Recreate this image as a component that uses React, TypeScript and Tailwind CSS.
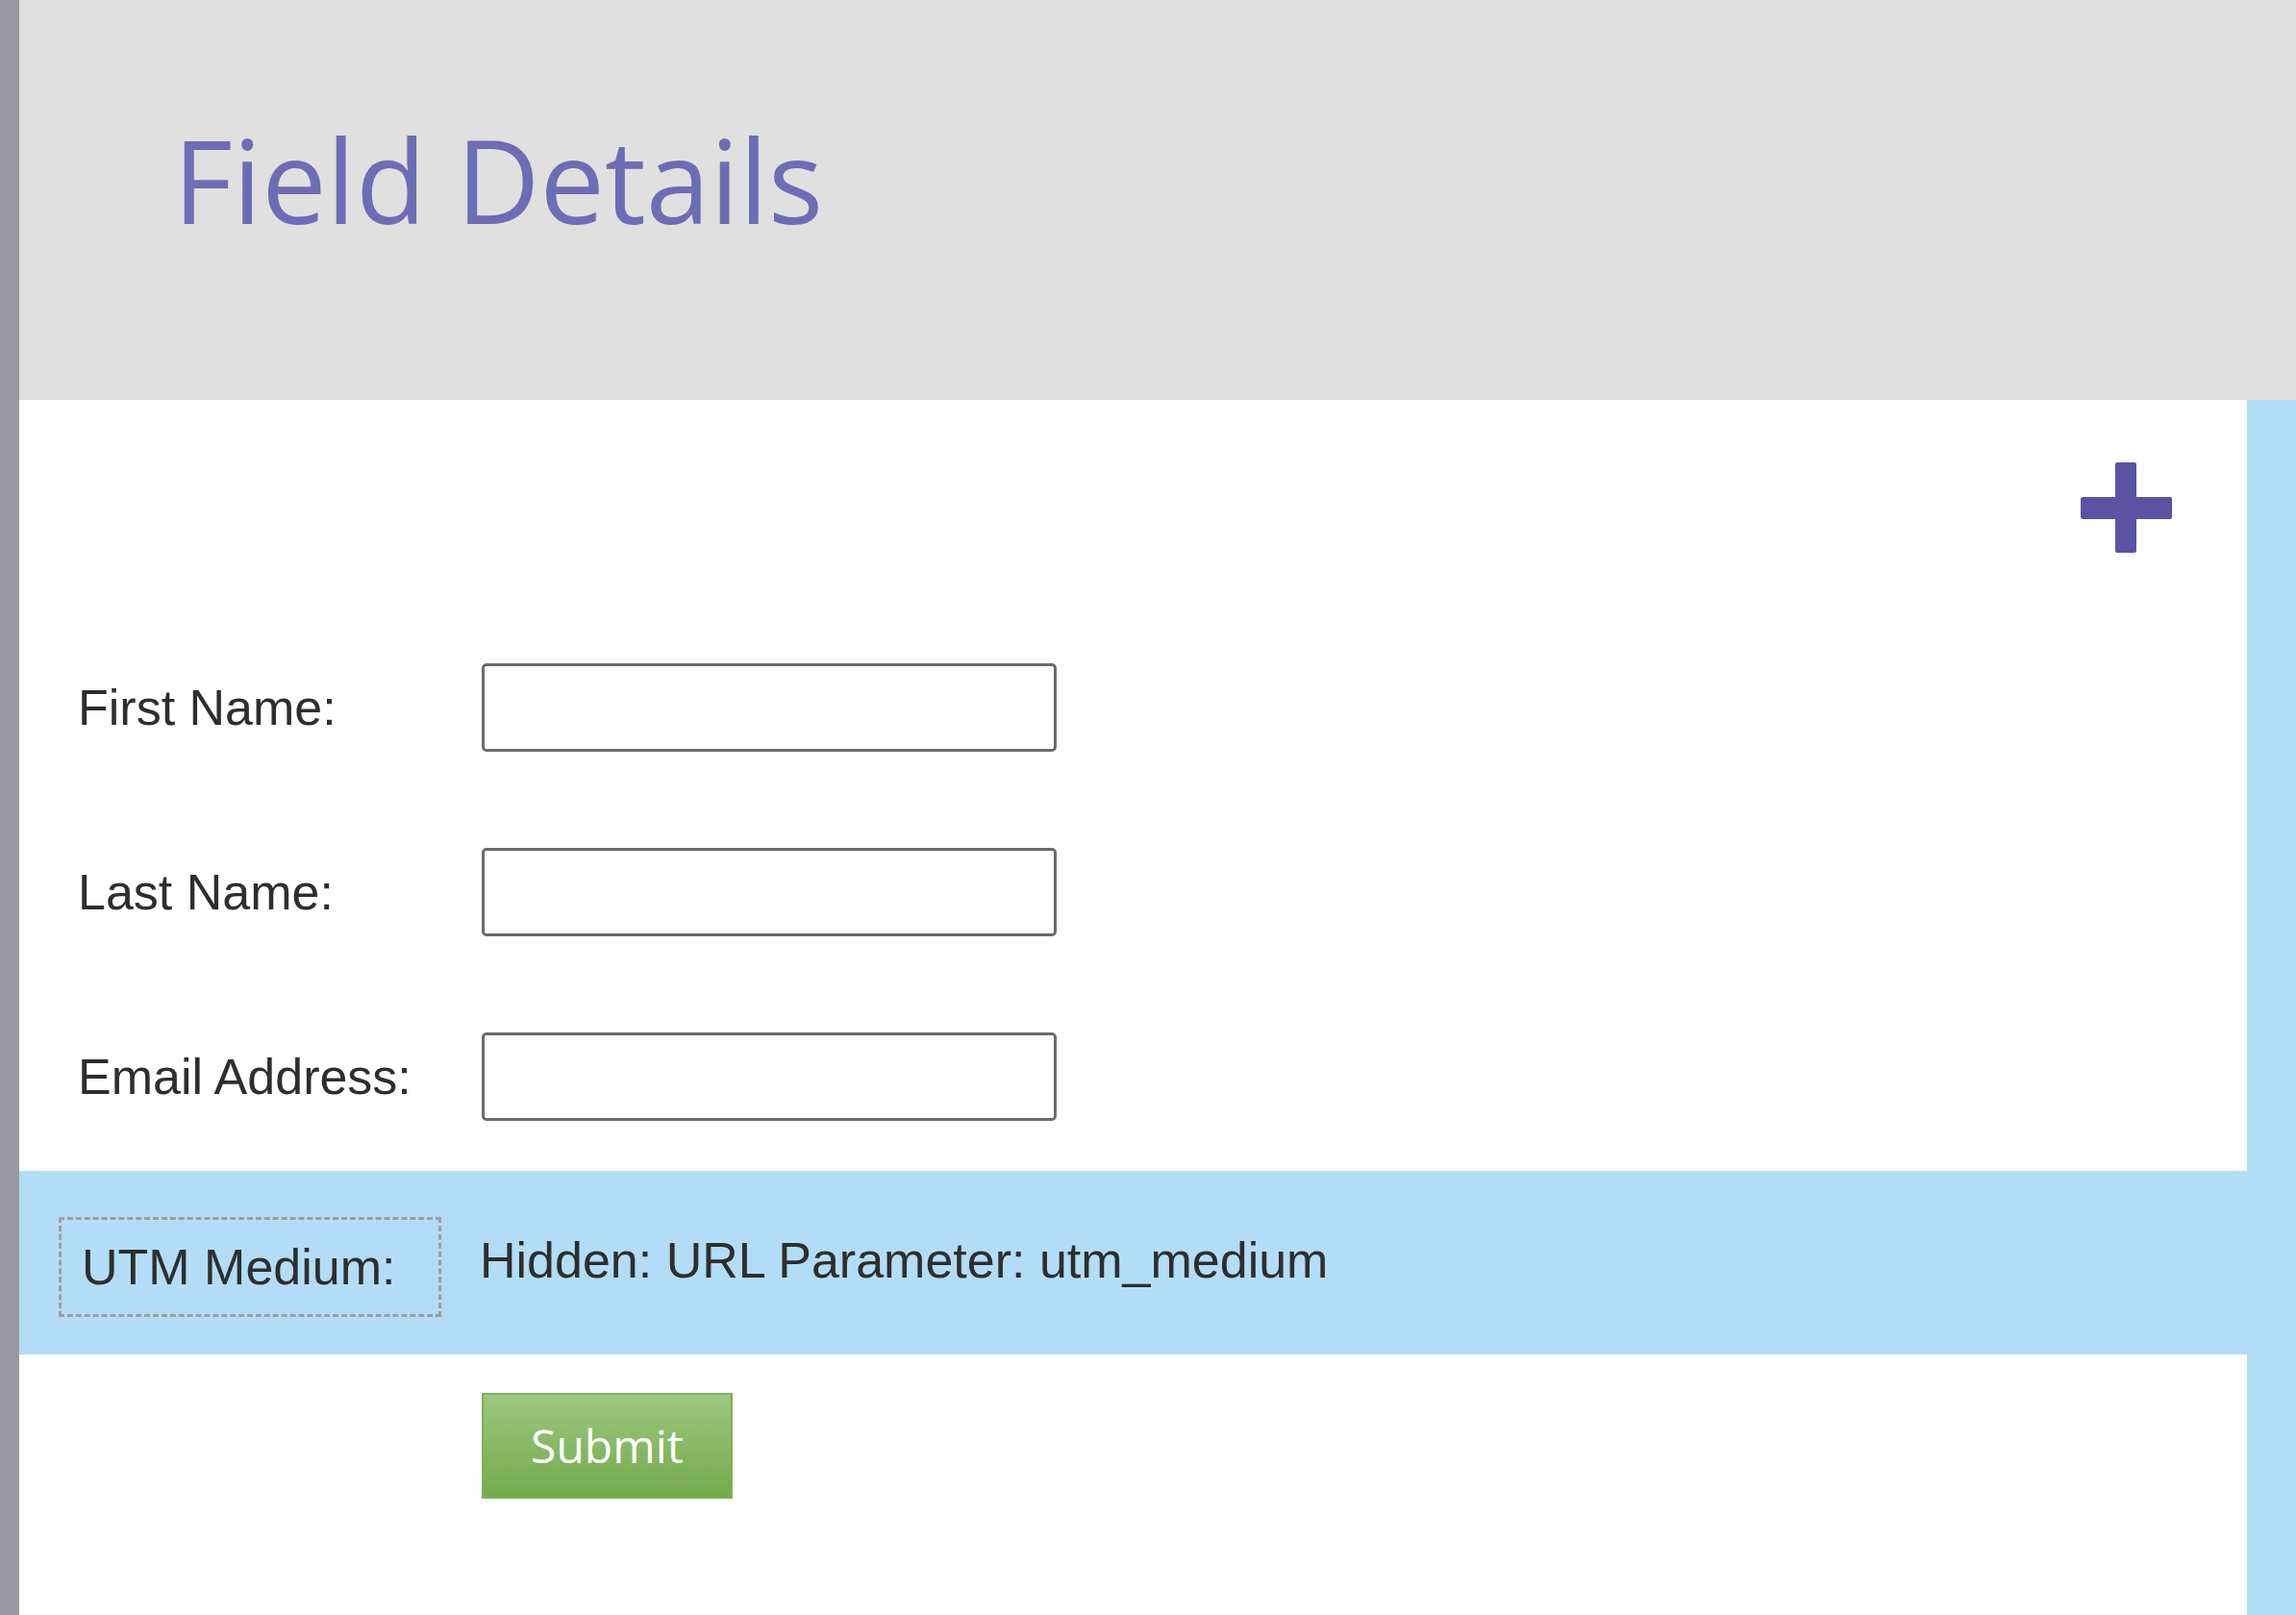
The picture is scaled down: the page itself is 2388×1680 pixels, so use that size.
import React from "react";

function Row({ label }: { label: string }) {
  return (
    <div className="flex items-center h-[92px]">
      <div className="w-[481px] pl-[61px] text-[52px] text-[#2e2e2e] font-['Liberation_Sans',Arial,sans-serif]">
        {label}
      </div>
      <div className="w-[598px] h-[92px] border-[3px] border-[#6b6b6b] rounded-[5px] bg-white" />
    </div>
  );
}

export default function App() {
  return (
    <div className="w-[2388px] h-[1680px] flex bg-white overflow-hidden">
      <div className="w-[20px] h-full bg-[#9a999f]" />
      <div className="flex-1 flex flex-col">
        <div className="h-[416px] bg-[#e0e0e0] pt-[127px] pl-[160px]">
          <div className="text-[120px] leading-none text-[#6e6cb4] font-['Open_Sans',sans-serif]">
            Field Details
          </div>
        </div>
        <div className="flex-1 flex">
          <div className="flex-1 flex flex-col">
            <div className="flex justify-end pt-[65px] pr-[78px]">
              <svg width="95" height="94" viewBox="0 0 95 94">
                <rect x="36" y="0" width="22" height="94" rx="2" fill="#5a53a3" />
                <rect x="0" y="36" width="95" height="23" rx="2" fill="#5a53a3" />
              </svg>
            </div>
            <div className="flex flex-col gap-[100px] mt-[115px]">
              <Row label="First Name:" />
              <Row label="Last Name:" />
              <Row label="Email Address:" />
            </div>
            <div className="mt-[52px] h-[191px] bg-[#b3ddf6] flex items-center font-['Liberation_Sans',Arial,sans-serif] text-[52px] text-[#2e2e2e]">
              <div className="ml-[41px] mt-[9px] w-[398px] h-[104px] border-[3px] border-dashed border-[#a19d99] flex items-center pl-[21px]">
                UTM Medium:
              </div>
              <div className="ml-[40px] mb-[5px]">Hidden: URL Parameter: utm_medium</div>
            </div>
            <div className="mt-[40px] ml-[481px]">
              <button className="w-[261px] h-[110px] border-2 border-[#7ab356] bg-gradient-to-b from-[#9cc780] to-[#74ab4b] text-white text-[48px] font-['Open_Sans',sans-serif] flex items-center justify-center">
                Submit
              </button>
            </div>
          </div>
          <div className="w-[51px] bg-[#b3ddf6]" />
        </div>
      </div>
    </div>
  );
}
